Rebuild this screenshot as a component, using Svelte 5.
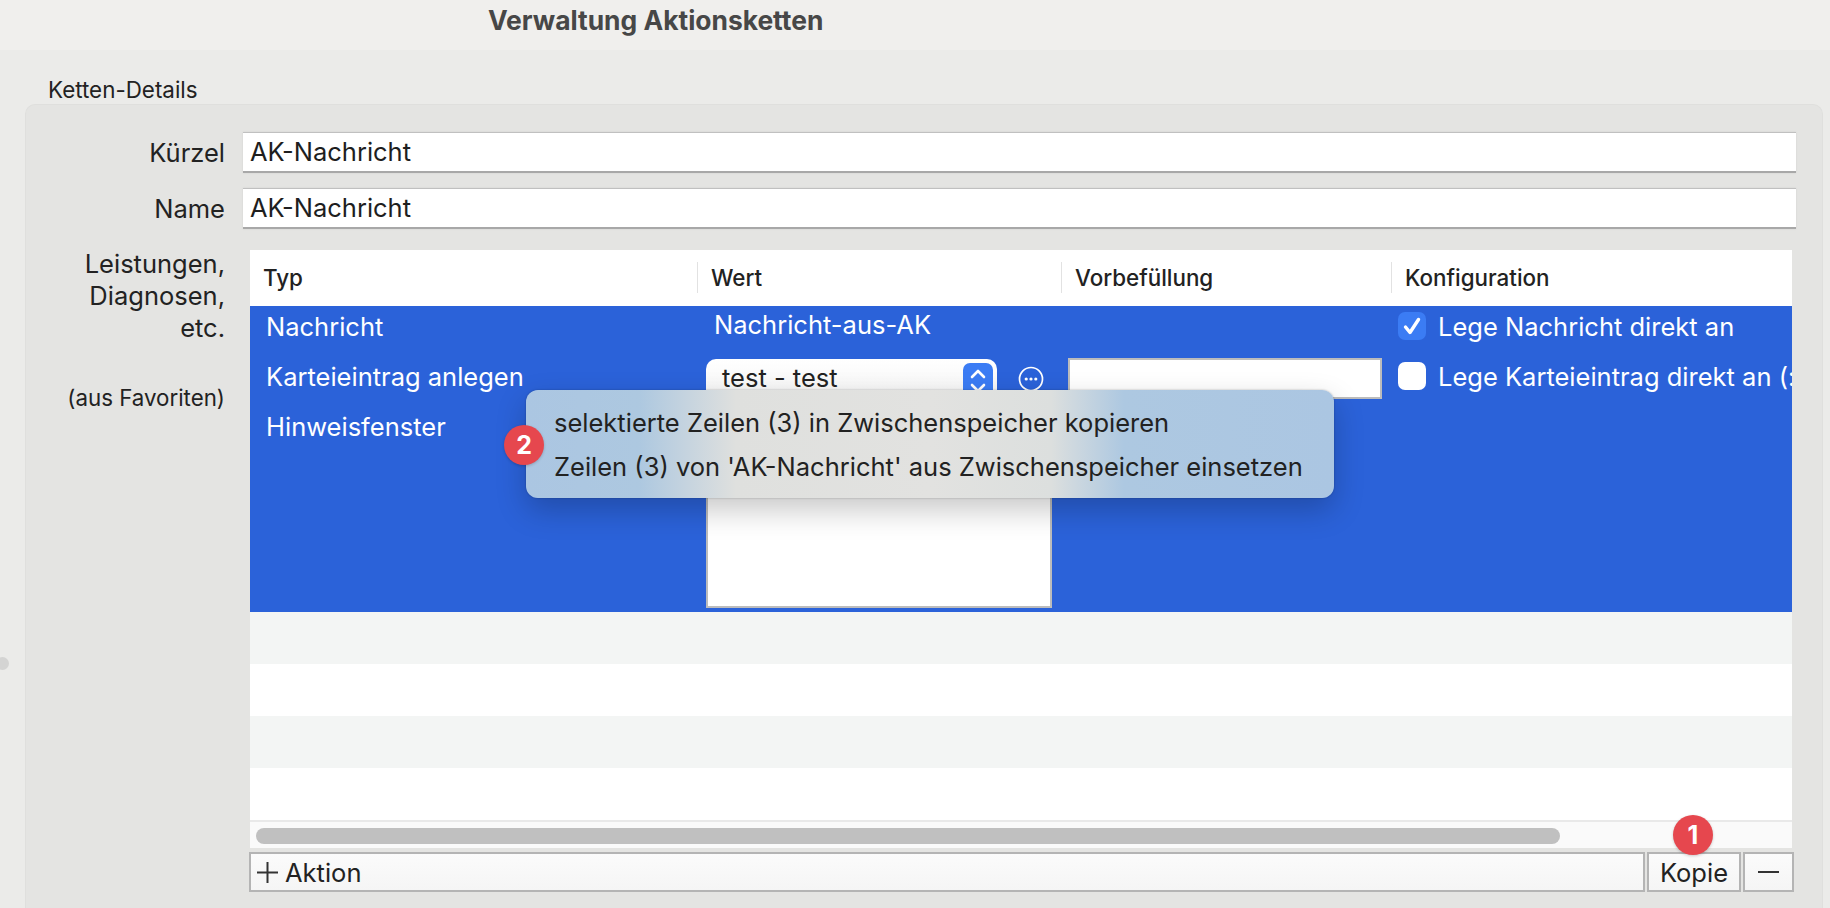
<script lang="ts">
  const emptyRows = [0, 1, 2, 3]
</script>

<div class="window">
  <div class="titlebar">Verwaltung Aktionsketten</div>
  <div class="edge-dot"></div>
  <div class="legend">Ketten-Details</div>

  <section class="panel">
    <div class="form-row first">
      <span class="label">Kürzel</span>
      <div class="field">AK-Nachricht</div>
    </div>
    <div class="form-row">
      <span class="label">Name</span>
      <div class="field">AK-Nachricht</div>
    </div>

    <div class="table-row">
      <div class="side">
        <span class="label multi">Leistungen,<br />Diagnosen,<br />etc.</span>
        <span class="label small">(aus Favoriten)</span>
      </div>

      <div class="table-col">
        <div class="table">
          <div class="head">
            <div class="th c1">Typ</div>
            <div class="th c2">Wert</div>
            <div class="th c3">Vorbefüllung</div>
            <div class="th c4">Konfiguration</div>
          </div>

          <div class="selected">
            <div class="row r1">
              <div class="c1 typ">Nachricht</div>
              <div class="c2 wert">Nachricht-aus-AK</div>
              <div class="c3"></div>
              <div class="c4 conf">
                <span class="check on">
                  <svg width="20" height="20" viewBox="0 0 20 20" fill="none" stroke="#fff" stroke-width="3.4" stroke-linecap="round" stroke-linejoin="round">
                    <polyline points="3.5,11 8,16.5 16.5,3.5" />
                  </svg>
                </span>
                Lege Nachricht direkt an
              </div>
            </div>

            <div class="row r2">
              <div class="c1 typ">Karteieintrag anlegen</div>
              <div class="c2 ctl">
                <div class="select">
                  test - test
                  <span class="stepper">
                    <svg width="20" height="32" viewBox="0 0 20 32" fill="none" stroke="#fff" stroke-width="2.6" stroke-linecap="round" stroke-linejoin="round">
                      <polyline points="4,12 10,6 16,12" />
                      <polyline points="4,20 10,26 16,20" />
                    </svg>
                  </span>
                </div>
                <svg class="more" width="26" height="26" viewBox="0 0 26 26">
                  <circle cx="13" cy="13" r="11.5" fill="none" stroke="#fff" stroke-width="1.7" />
                  <circle cx="8.2" cy="13" r="1.6" fill="#fff" />
                  <circle cx="13" cy="13" r="1.6" fill="#fff" />
                  <circle cx="17.8" cy="13" r="1.6" fill="#fff" />
                </svg>
              </div>
              <div class="c3"><div class="prefill"></div></div>
              <div class="c4 conf">
                <span class="check"></span>
                Lege Karteieintrag direkt an (:
              </div>
            </div>

            <div class="row r3">
              <div class="c1 typ">Hinweisfenster</div>
              <div class="c2"><div class="textarea"></div></div>
            </div>
          </div>

          {#each emptyRows as i}
            <div class="empty" class:odd={i % 2 === 0}></div>
          {/each}

          <div class="scrollbar"><div class="thumb"></div></div>
        </div>

        <div class="buttons">
          <button class="btn add" type="button">
            <svg width="21" height="21" viewBox="0 0 21 21" stroke="#333" stroke-width="2">
              <line x1="10.5" y1="0" x2="10.5" y2="21" />
              <line x1="0" y1="10.5" x2="21" y2="10.5" />
            </svg>
            Aktion
          </button>
          <button class="btn copy" type="button">Kopie</button>
          <button class="btn minus" type="button"><span class="dash"></span></button>
        </div>
      </div>
    </div>
  </section>

  <div class="popover">
    <div>selektierte Zeilen (3) in Zwischenspeicher kopieren</div>
    <div>Zeilen (3) von 'AK-Nachricht' aus Zwischenspeicher einsetzen</div>
  </div>
  <span class="badge two">2</span>
  <span class="badge one">1</span>
</div>

<style>
  :global(body) {
    margin: 0;
    background: #ebebe9;
  }

  .window {
    position: relative;
    width: 1830px;
    height: 908px;
    overflow: hidden;
    background: #ebebe9;
    color: #222;
    font-family: Inter, "Liberation Sans", sans-serif;
    font-size: 25.5px;
  }

  .titlebar {
    height: 50px;
    padding-left: 488px;
    line-height: 41px;
    font-size: 26.4px;
    font-weight: 700;
    color: #474747;
    background: #f0efed;
    box-sizing: border-box;
  }

  .edge-dot {
    position: absolute;
    left: -4px;
    top: 657px;
    width: 13px;
    height: 13px;
    border-radius: 50%;
    background: #d4d4d3;
  }

  .legend {
    height: 54px;
    padding-left: 48px;
    line-height: 80px;
    font-size: 22.4px;
    box-sizing: border-box;
  }

  .panel {
    height: 804px;
    margin: 0 7px 0 25px;
    box-sizing: border-box;
    background: #e4e4e2;
    border: 1px solid #dfdfdd;
    border-bottom: none;
    border-radius: 10px 10px 0 0;
  }

  .form-row {
    display: flex;
    align-items: center;
    height: 41px;
    margin-top: 15px;
    margin-right: 26px;
  }

  .form-row.first {
    margin-top: 27px;
  }

  .label {
    width: 199px;
    flex-shrink: 0;
    text-align: right;
    display: block;
  }

  .field {
    flex: 1;
    height: 41px;
    margin-left: 18px;
    padding-left: 7px;
    box-sizing: border-box;
    background: #fff;
    border-top: 1px solid #c0c0c0;
    border-bottom: 2px solid #a8a8a8;
    line-height: 38px;
    color: #1e1e1e;
    box-shadow: 0 0 2px rgba(0, 0, 0, 0.08);
  }

  .table-row {
    display: flex;
    margin-top: 21px;
  }

  .side {
    width: 199px;
    flex-shrink: 0;
  }

  .multi {
    margin-top: -2px;
    line-height: 32px;
  }

  .small {
    margin-top: 42px;
    font-size: 22.3px;
    line-height: 24px;
  }

  .table-col {
    margin-left: 25px;
    width: 1546px;
  }

  .table {
    width: 1542px;
    background: #fff;
  }

  .head {
    display: flex;
    height: 54px;
    align-items: center;
    font-size: 22.4px;
    font-weight: 500;
  }

  .c1 {
    width: 447px;
    flex-shrink: 0;
    box-sizing: border-box;
  }

  .c2 {
    width: 364px;
    flex-shrink: 0;
    box-sizing: border-box;
  }

  .c3 {
    width: 330px;
    flex-shrink: 0;
    box-sizing: border-box;
  }

  .c4 {
    flex: 1;
    min-width: 0;
    box-sizing: border-box;
  }

  .th {
    height: 31px;
    line-height: 31px;
    padding-left: 13px;
    border-left: 1px solid #e2e2e2;
  }

  .th.c1 {
    border-left: none;
  }

  .selected {
    margin-top: 2px;
    height: 306px;
    background: #2b62d9;
    color: #fff;
  }

  .row {
    display: flex;
    overflow: hidden;
  }

  .r1 {
    height: 40px;
    margin-bottom: 12px;
    align-items: center;
  }

  .r2 {
    height: 50px;
    align-items: flex-start;
  }

  .r3 {
    height: 204px;
  }

  .typ {
    padding-left: 16px;
    white-space: nowrap;
  }

  .r2 .typ {
    line-height: 37px;
  }

  .r3 .typ {
    line-height: 38px;
  }

  .wert {
    padding-left: 17px;
    margin-top: -4px;
  }

  .conf {
    display: flex;
    align-items: center;
    gap: 12px;
    padding-left: 7px;
    white-space: nowrap;
    overflow: hidden;
  }

  .r2 .conf {
    height: 36px;
    margin-top: 0;
  }

  .check {
    width: 28px;
    height: 28px;
    flex-shrink: 0;
    border-radius: 7px;
    background: #fff;
    display: flex;
    align-items: center;
    justify-content: center;
  }

  .check.on {
    background: #3b7cf4;
  }

  .ctl {
    display: flex;
    align-items: flex-start;
    padding-left: 9px;
    gap: 21px;
  }

  .select {
    position: relative;
    width: 291px;
    height: 50px;
    padding-left: 16px;
    box-sizing: border-box;
    line-height: 37px;
    color: #222;
    border-radius: 10px 10px 0 0;
    background: linear-gradient(#fff, #f2f2f2);
    margin-top: 1px;
  }

  .stepper {
    position: absolute;
    top: 4px;
    right: 4px;
    width: 30px;
    height: 36px;
    border-radius: 7px;
    background: #3b7cf4;
    display: flex;
    align-items: center;
    justify-content: center;
  }

  .more {
    margin-top: 8px;
  }

  .prefill {
    width: 314px;
    height: 41px;
    margin-left: 7px;
    box-sizing: border-box;
    background: #fff;
    border: 2px solid #bcbcbc;
  }

  .textarea {
    width: 346px;
    height: 200px;
    margin-left: 9px;
    box-sizing: border-box;
    background: #fff;
    border: 2px solid #bcbcbc;
  }

  .empty {
    height: 52px;
    background: #fff;
  }

  .empty.odd {
    background: #f3f5f4;
  }

  .scrollbar {
    height: 28px;
    padding: 6px 232px 4px 6px;
    box-sizing: border-box;
    background: #fafafa;
    border-top: 2px solid #e9e9e9;
  }

  .thumb {
    height: 16px;
    border-radius: 8px;
    background: #c0c0c0;
  }

  .buttons {
    display: flex;
    gap: 2px;
    margin-top: 4px;
    margin-left: -1px;
  }

  .btn {
    height: 40px;
    padding: 0;
    box-sizing: border-box;
    font: inherit;
    color: #222;
    background: linear-gradient(#fbfbfb, #f5f5f5);
    border: 2px solid #b4b4b4;
    display: flex;
    align-items: center;
    justify-content: center;
  }

  .add {
    flex: none;
    width: 1396px;
    justify-content: flex-start;
    padding-left: 6px;
    gap: 7px;
  }

  .copy {
    width: 94px;
  }

  .minus {
    width: 51px;
  }

  .dash {
    display: block;
    width: 21px;
    height: 2px;
    background: #333;
  }

  .popover {
    position: absolute;
    left: 526px;
    top: 390px;
    width: 808px;
    height: 108px;
    padding: 11px 0 0 28px;
    box-sizing: border-box;
    line-height: 44px;
    color: #222;
    border-radius: 12px;
    background: linear-gradient(90deg, #abc6e2 0%, #adc8e0 14%, #dfe0de 26%, #e2e2e0 50%, #dcdfde 65%, #adc8e1 74%, #abc6e2 100%);
    box-shadow: 0 12px 30px rgba(0, 0, 0, 0.22), 0 0 2px rgba(0, 0, 0, 0.3);
    white-space: nowrap;
  }

  .badge {
    position: absolute;
    width: 40px;
    height: 40px;
    border-radius: 50%;
    background: #e6474e;
    color: #fff;
    font-size: 25px;
    font-weight: 700;
    line-height: 40px;
    text-align: center;
    box-shadow: 0 1px 3px rgba(0, 0, 0, 0.2);
  }

  .two {
    left: 504px;
    top: 425px;
  }

  .one {
    left: 1673px;
    top: 815px;
  }
</style>
